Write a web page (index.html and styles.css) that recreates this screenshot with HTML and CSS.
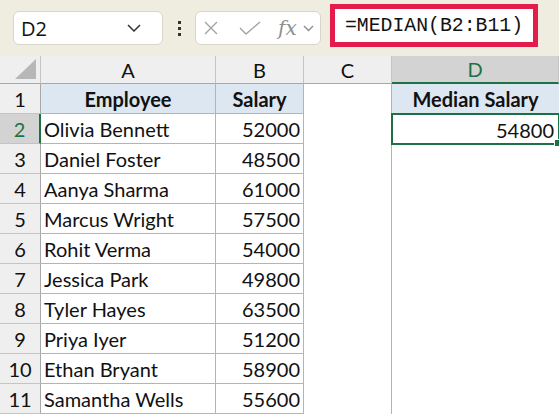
FILE: index.html
```html
<!DOCTYPE html>
<html>
<head>
<meta charset="utf-8">
<link rel="stylesheet" href="styles.css">
</head>
<body>
<div class="app">
  <div class="topbar">
    <div class="namebox">
      <span class="ref">D2</span>
      <svg class="chev" width="14" height="8" viewBox="0 0 14 8"><path d="M1 1 L7 7 L13 1" fill="none" stroke="#333" stroke-width="1.5"/></svg>
    </div>
    <div class="dots"><i></i><i></i><i></i></div>
    <div class="fbtns">
      <svg width="14" height="14" viewBox="0 0 14 14"><path d="M1 1 L13 13 M13 1 L1 13" stroke="#a3a3a3" stroke-width="1.4" fill="none"/></svg>
      <svg width="22" height="14" viewBox="0 0 22 14"><path d="M1 7 L7 13 L21 1" stroke="#a3a3a3" stroke-width="1.4" fill="none"/></svg>
      <span class="fx">fx</span>
      <svg width="11" height="7" viewBox="0 0 11 7"><path d="M1 1 L5.5 5.5 L10 1" fill="none" stroke="#8a8a8a" stroke-width="1.3"/></svg>
    </div>
    <div class="formula">=MEDIAN(B2:B11)</div>
  </div>
  <div class="sheet">
    <div class="hd corner"><span class="tri"></span></div>
    <div class="hd">A</div>
    <div class="hd">B</div>
    <div class="hd">C</div>
    <div class="hd sel-col">D</div>

    <div class="rh">1</div>
    <div class="c th">Employee</div>
    <div class="c th">Salary</div>
    <div class="c blank"></div>
    <div class="c th dh">Median Salary</div>

    <div class="rh sel-row">2</div>
    <div class="c">Olivia Bennett</div>
    <div class="c num">52000</div>
    <div class="c blank"></div>
    <div class="c num active">54800</div>

    <div class="rh">3</div><div class="c">Daniel Foster</div><div class="c num">48500</div><div class="c blank"></div><div class="c empty"></div>
    <div class="rh">4</div><div class="c">Aanya Sharma</div><div class="c num">61000</div><div class="c blank"></div><div class="c empty"></div>
    <div class="rh">5</div><div class="c">Marcus Wright</div><div class="c num">57500</div><div class="c blank"></div><div class="c empty"></div>
    <div class="rh">6</div><div class="c">Rohit Verma</div><div class="c num">54000</div><div class="c blank"></div><div class="c empty"></div>
    <div class="rh">7</div><div class="c">Jessica Park</div><div class="c num">49800</div><div class="c blank"></div><div class="c empty"></div>
    <div class="rh">8</div><div class="c">Tyler Hayes</div><div class="c num">63500</div><div class="c blank"></div><div class="c empty"></div>
    <div class="rh">9</div><div class="c">Priya Iyer</div><div class="c num">51200</div><div class="c blank"></div><div class="c empty"></div>
    <div class="rh">10</div><div class="c">Ethan Bryant</div><div class="c num">58900</div><div class="c blank"></div><div class="c empty"></div>
    <div class="rh">11</div><div class="c">Samantha Wells</div><div class="c num">55600</div><div class="c blank"></div><div class="c empty"></div>
  </div>
</div>
</body>
</html>
```

FILE: styles.css
```css
* { box-sizing: border-box; }
html, body { margin: 0; padding: 0; background: #fff; }
body { width: 559px; height: 416px; overflow: hidden; font-family: "Lato", "Liberation Sans", sans-serif; }

.topbar {
  height: 56px;
  background: #efeddf;
  display: flex;
  align-items: flex-start;
  padding: 11px 0 0 13px;
}
.namebox {
  width: 150px; height: 34px;
  background: #fff;
  border: 1px solid #d8d6ca;
  border-radius: 6px;
  display: flex; align-items: center; justify-content: space-between;
  padding: 0 21px 0 7px;
}
.ref { font-family: "Open Sans", "Liberation Sans", sans-serif; font-size: 20px; color: #111; }
.dots { width: 32px; height: 34px; display: flex; flex-direction: column; align-items: center; justify-content: center; gap: 3px; }
.dots i { display: block; width: 3px; height: 3px; background: #333; }
.fbtns {
  width: 126px; height: 34px;
  background: #fff;
  border: 1px solid #d8d6ca;
  border-radius: 6px;
  display: flex; align-items: center;
  padding: 0 0 0 8px;
  gap: 0;
}
.fbtns svg:nth-child(1) { margin-right: 21px; }
.fbtns svg:nth-child(2) { margin-right: 17px; }
.fx { font-family: "DejaVu Serif", "Liberation Serif", serif; font-style: italic; font-size: 20px; color: #8f8f8f; margin-right: 6px; line-height: 1; }
.formula {
  margin: -7px 0 0 9px;
  width: 208px; height: 43px;
  border: 5px solid #e31c4b;
  background: #fff;
  font-family: "Liberation Mono", "DejaVu Sans Mono", monospace;
  font-size: 19.8px;
  color: #111;
  display: flex; align-items: center;
  padding-left: 10px;
}

.sheet {
  display: grid;
  grid-template-columns: 41px 175px 88px 88px 167px;
  grid-template-rows: 28px repeat(11, 30px);
  font-size: 20px;
  color: #111;
}
.hd {
  background: #efefef;
  border-right: 1px solid #c4c4c4;
  border-bottom: 1px solid #a8a8a8;
  display: flex; align-items: center; justify-content: center;
  font-family: "Lato", "Liberation Sans", sans-serif;
  font-size: 20px;
}
.corner { position: relative; }
.tri {
  position: absolute; right: 4px; bottom: 4px;
  width: 0; height: 0;
  border-left: 21px solid transparent;
  border-bottom: 20px solid #b7b7b7;
}
.sel-col {
  background: #d3d3d3;
  color: #1e7145;
  border-bottom: 2px solid #1e7145;
}
.rh {
  background: #efefef;
  border-right: 1px solid #a8a8a8;
  border-bottom: 1px solid #c4c4c4;
  display: flex; align-items: center; justify-content: center;
}
.sel-row {
  background: #d3d3d3;
  color: #1e7145;
  border-right: 2px solid #1e7145;
}
.c {
  border-right: 1px solid #b4b4b4;
  border-bottom: 1px solid #b4b4b4;
  display: flex; align-items: center;
  padding: 1px 3px 0 3px;
  white-space: nowrap;
}
.th {
  background: #dde7f2;
  font-weight: 700;
  justify-content: center;
}
.num { justify-content: flex-end; }
.blank { border-bottom: none; }
.empty { border: none; }
.dh { border-right: none; }
.active {
  position: relative;
  outline: 2px solid #1e7145;
  outline-offset: -1px;
  border: none;
  padding-right: 5px;
}
.active::after {
  content: "";
  position: absolute;
  right: -3px; bottom: -3px;
  width: 6px; height: 6px;
  background: #1e7145;
  border: 1px solid #fff;
}
```
